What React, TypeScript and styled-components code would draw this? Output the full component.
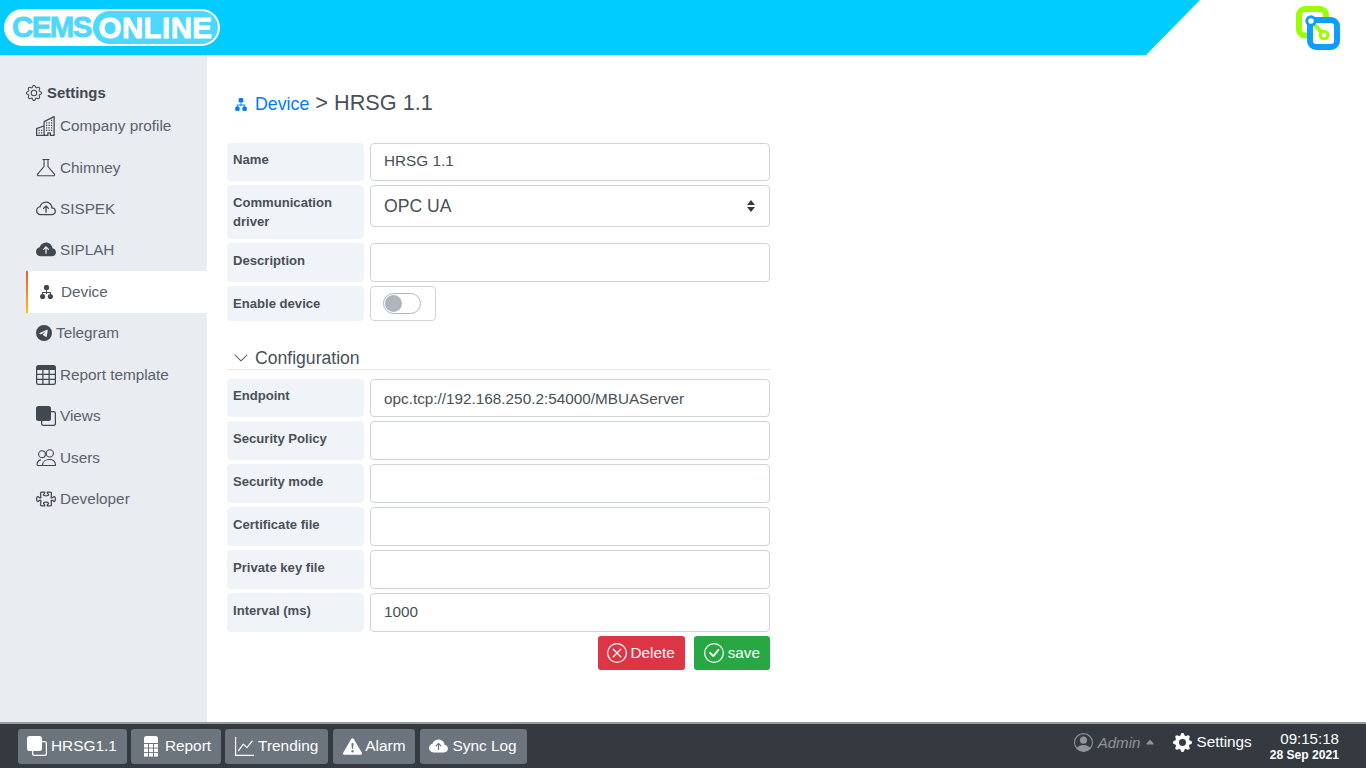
import React from 'react'
import styled, { createGlobalStyle } from 'styled-components'
import {
  BsGear, BsBuildings, BsCloudArrowUp, BsCloudArrowUpFill, BsTelegram, BsTable,
  BsFront, BsPuzzle, BsGraphUp, BsExclamationTriangleFill, BsGearFill,
  BsPersonCircle, BsXCircle, BsCheckCircle, BsChevronDown, BsCaretUpFill,
} from 'react-icons/bs'

const GlobalStyle = createGlobalStyle`
  html, body { margin: 0; padding: 0; height: 100%; overflow: hidden; }
  body { font-family: "Liberation Sans", Arial, sans-serif; background: #fff; color: #495057; }
`

function DeviceIcon({ size }: { size: number }) {
  return (
    <svg width={size} height={size * 1.1} viewBox="0 0 13 14.3" fill="currentColor">
      <rect x="4" y="0" width="5" height="5" rx="1.6" />
      <path d="M6 5h1v2h3.5a.6.6 0 0 1 .6.6V9h-1V8H7v1H6V8H2.9v1h-1V7.6a.6.6 0 0 1 .6-.6H6z" />
      <circle cx="2.6" cy="11.6" r="2.6" />
      <circle cx="10.4" cy="11.6" r="2.6" />
    </svg>
  )
}

function FlaskIcon() {
  return (
    <svg width="20" height="20" viewBox="0 0 20 20" fill="none" stroke="currentColor" strokeWidth="1.1">
      <path d="M6.5 1.5h7M8 1.5v7L1.6 16.2a1 1 0 0 0 .8 1.6h15.2a1 1 0 0 0 .8-1.6L12 8.5v-7" />
    </svg>
  )
}

function UsersIcon() {
  return (
    <svg width="20" height="20" viewBox="0 0 20 20" fill="none" stroke="currentColor" strokeWidth="1.1">
      <circle cx="6" cy="6.2" r="3.4" />
      <circle cx="13.8" cy="5.4" r="3.6" />
      <path d="M1 17.5c0-3.4 1.6-5.4 4-5.6M1 17.5h6" />
      <path d="M6.5 17.5c0-3.6 2.8-6 6.8-6s6.2 2.4 6.2 6z" />
    </svg>
  )
}

function ReportIcon() {
  const cells: [number, number][] = []
  for (let row = 0; row < 3; row++) {
    for (let col = 0; col < 3; col++) cells.push([col * 5, 8 + row * 4.5])
  }
  return (
    <svg width="16" height="21" viewBox="0 0 14 21" fill="#fff">
      <path d="M2.5 0h9A2.5 2.5 0 0 1 14 2.5V7H0V2.5A2.5 2.5 0 0 1 2.5 0z" />
      {cells.map(([x, y]) => (
        <rect key={`${x}-${y}`} x={x} y={y} width="4" height="3.6" />
      ))}
    </svg>
  )
}

const menu = [
  { label: 'Company profile', icon: <BsBuildings size={20} />, gap: 4 },
  { label: 'Chimney', icon: <FlaskIcon />, gap: 4 },
  { label: 'SISPEK', icon: <BsCloudArrowUp size={20} />, gap: 4 },
  { label: 'SIPLAH', icon: <BsCloudArrowUpFill size={20} />, gap: 4 },
  { label: 'Device', icon: <DeviceIcon size={13} />, gap: 8, active: true },
  { label: 'Telegram', icon: <BsTelegram size={16} />, gap: 4 },
  { label: 'Report template', icon: <BsTable size={20} />, gap: 4 },
  { label: 'Views', icon: <BsFront size={20} />, gap: 4 },
  { label: 'Users', icon: <UsersIcon />, gap: 4 },
  { label: 'Developer', icon: <BsPuzzle size={20} />, gap: 4 },
]

const configRows = [
  { label: 'Endpoint', value: 'opc.tcp://192.168.250.2:54000/MBUAServer', short: true, nudge: 1 },
  { label: 'Security Policy', value: '' },
  { label: 'Security mode', value: '' },
  { label: 'Certificate file', value: '' },
  { label: 'Private key file', value: '' },
  { label: 'Interval (ms)', value: '1000', nudge: -1 },
]

const tabs = [
  { label: 'HRSG1.1', icon: <BsFront size={20} />, gap: 4, left: 9, after: 0 },
  { label: 'Report', icon: <ReportIcon />, gap: 6, left: 12, after: 0 },
  { label: 'Trending', icon: <BsGraphUp size={19} />, gap: 4, left: 10, after: 1 },
  { label: 'Alarm', icon: <BsExclamationTriangleFill size={19} />, gap: 3, left: 10, after: 1 },
  { label: 'Sync Log', icon: <BsCloudArrowUpFill size={19} />, gap: 4, left: 9, after: 0 },
]

function Logo() {
  return (
    <LogoPill>
      <LogoCems>CEMS</LogoCems>
      <LogoOnline>ONLINE</LogoOnline>
    </LogoPill>
  )
}

function AppMark() {
  return (
    <svg width="44" height="44" viewBox="0 0 44 44" fill="none">
      <rect x="3" y="3" width="27" height="26.5" rx="6" stroke="#9cff00" strokeWidth="6" />
      <rect x="14" y="14" width="27" height="27" rx="6" fill="#fff" stroke="#0f9dff" strokeWidth="6" />
      <path d="M15 15 L28 29" stroke="#9cff00" strokeWidth="4" />
      <circle cx="15" cy="15" r="4.2" fill="#fff" stroke="#0f9dff" strokeWidth="3" />
      <circle cx="28" cy="29" r="3.8" fill="#fff" stroke="#9cff00" strokeWidth="3" />
    </svg>
  )
}

function FormRow({ label, value, short, nudge = 0 }: { label: string; value: string; short?: boolean; nudge?: number }) {
  return (
    <Row>
      <RowLabel $height={short ? 38 : 39}>{label}</RowLabel>
      <TextField $height={short ? 38 : 39} $nudge={nudge} defaultValue={value} />
    </Row>
  )
}

export default function App() {
  return (
    <Page>
      <GlobalStyle />
      <Header>
        <HeaderBand>
          <Logo />
        </HeaderBand>
        <MarkSlot>
          <AppMark />
        </MarkSlot>
      </Header>

      <Body>
        <Sidebar>
          <SideTitle><BsGear size={16} /> Settings</SideTitle>
          {menu.map((m) => (
            <MenuItem key={m.label} $active={m.active} $gap={m.gap}>
              {m.icon}
              <span>{m.label}</span>
            </MenuItem>
          ))}
        </Sidebar>

        <Main>
          <Breadcrumb>
            <CrumbLink><DeviceIcon size={12} /> Device</CrumbLink>
            <span>&gt; HRSG 1.1</span>
          </Breadcrumb>

          <Form>
            <FormRow label="Name" value="HRSG 1.1" short nudge={-1} />
            <Row>
              <RowLabel $height={54}>Communication driver</RowLabel>
              <SelectBox>
                <span>OPC UA</span>
                <SelectArrows viewBox="0 0 10 14">
                  <path d="M5 1 L9 6 H1 Z M5 13 L1 8 H9 Z" fill="#343a40" />
                </SelectArrows>
              </SelectBox>
            </Row>
            <FormRow label="Description" value="" />
            <Row>
              <RowLabel $height={35}>Enable device</RowLabel>
              <SwitchBox>
                <SwitchTrack><SwitchKnob /></SwitchTrack>
              </SwitchBox>
            </Row>

            <SectionTitle>
              <BsChevronDown size={16} />
              Configuration
            </SectionTitle>

            {configRows.map((r) => (
              <FormRow key={r.label} label={r.label} value={r.value} short={r.short} nudge={r.nudge} />
            ))}

            <Actions>
              <ActionButton $color="#dc3545" $left={9} $gap={3}><BsXCircle size={20} /> Delete</ActionButton>
              <ActionButton $color="#28a745" $left={10} $gap={4}><BsCheckCircle size={20} /> save</ActionButton>
            </Actions>
          </Form>
        </Main>
      </Body>

      <Footer>
        <Tabs>
          {tabs.map((t) => (
            <Tab key={t.label} $gap={t.gap} $left={t.left} $after={t.after}>
              {t.icon}
              <span>{t.label}</span>
            </Tab>
          ))}
        </Tabs>
        <Status>
          <UserMenu>
            <BsPersonCircle size={19} />
            <em>Admin</em>
            <BsCaretUpFill size={10} />
          </UserMenu>
          <SettingsLink><BsGearFill size={19} /> Settings</SettingsLink>
          <Clock>
            <Time>09:15:18</Time>
            <DateText>28 Sep 2021</DateText>
          </Clock>
        </Status>
      </Footer>
    </Page>
  )
}

const Page = styled.div`
  width: 1366px;
  height: 768px;
  display: flex;
  flex-direction: column;
  overflow: hidden;
`

const Header = styled.header`
  height: 55px;
  flex: none;
  display: flex;
  justify-content: space-between;
  background: #fff;
`

const HeaderBand = styled.div`
  width: 1200px;
  height: 55px;
  padding: 9px 0 0 4px;
  box-sizing: border-box;
  background: #00ccff;
  clip-path: polygon(0 0, 100% 0, 1146px 100%, 0 100%);
`

const LogoPill = styled.div`
  width: 216px;
  height: 37px;
  display: flex;
  align-items: stretch;
  justify-content: space-between;
  box-sizing: border-box;
  background: #fff;
  border-radius: 19px;
  font-family: "Liberation Sans", Arial, sans-serif;
  font-weight: 700;
  font-size: 29.5px;
  line-height: 36px;
`

const LogoCems = styled.span`
  color: #4fd8ff;
  padding-left: 8px;
  letter-spacing: -1.6px;
  -webkit-text-stroke: 0.8px #4fd8ff;
`

const LogoOnline = styled.span`
  width: 125px;
  margin: 2px;
  text-align: center;
  background: #4fd8ff;
  color: #fff;
  border-radius: 17px;
  line-height: 34px;
  letter-spacing: 0.4px;
  -webkit-text-stroke: 0.8px #fff;
`

const MarkSlot = styled.div`
  padding: 6px 26px 0 0;
`

const Body = styled.div`
  flex: 1;
  display: flex;
  min-height: 0;
`

const Sidebar = styled.aside`
  width: 207px;
  flex: none;
  box-sizing: border-box;
  padding: 27px 0 0 26px;
  background: #e9ecf1;
`

const SideTitle = styled.div`
  height: 21px;
  display: flex;
  align-items: center;
  gap: 5px;
  margin-bottom: 2.4px;
  font-size: 14.9px;
  font-weight: 700;
  color: #424850;
`

const MenuItem = styled.div<{ $active?: boolean; $gap: number }>`
  height: 41.44px;
  display: flex;
  align-items: center;
  gap: ${(p) => p.$gap}px;
  box-sizing: border-box;
  padding-left: ${(p) => (p.$active ? 12 : 10)}px;
  font-size: 15.3px;
  color: #59626e;
  background: ${(p) => (p.$active ? '#fff' : 'transparent')};
  border-left: ${(p) => (p.$active ? '2px solid' : '0')};
  border-image: ${(p) => (p.$active ? 'linear-gradient(#f0572b, #ffc107) 1' : 'none')};

  svg { color: #424850; flex: none; }
`

const Main = styled.main`
  flex: 1;
  padding: 35px 0 0 20px;
  background: #fff;
`

const Breadcrumb = styled.div`
  display: flex;
  gap: 6px;
  align-items: baseline;
  height: 53px;
  padding-left: 8px;
  font-size: 21.7px;
  color: #495057;
`

const CrumbLink = styled.span`
  font-size: 17.8px;
  color: #007bff;

  svg { margin-right: 3px; vertical-align: -1px; }
`

const Form = styled.form`
  width: 543px;
  display: flex;
  flex-direction: column;
  gap: 4px;
`

const Row = styled.div`
  display: flex;
  gap: 6px;
  align-items: flex-start;
`

const RowLabel = styled.label<{ $height: number }>`
  width: 137px;
  height: ${(p) => p.$height}px;
  flex: none;
  box-sizing: border-box;
  padding: ${(p) => (p.$height === 38 ? 7 : 8)}px 6px 0;
  background: #f0f3f8;
  border-radius: 4px;
  font-size: 13.1px;
  line-height: 19px;
  font-weight: 700;
  color: #495057;
`

const TextField = styled.input<{ $height: number; $nudge: number }>`
  flex: 1;
  height: ${(p) => p.$height}px;
  box-sizing: border-box;
  padding: ${(p) => 1 + p.$nudge}px 13px ${(p) => 1 - p.$nudge}px;
  border: 1px solid #ced4da;
  border-radius: 4px;
  font-family: "Liberation Sans", Arial, sans-serif;
  font-size: 15.3px;
  color: #495057;
  background: #fff;
`

const SelectBox = styled.div`
  flex: 1;
  height: 42px;
  display: flex;
  align-items: center;
  justify-content: space-between;
  box-sizing: border-box;
  padding: 0 13px;
  border: 1px solid #ced4da;
  border-radius: 4px;
  font-size: 17.6px;
  color: #495057;
`

const SelectArrows = styled.svg`
  width: 10px;
  height: 14px;
`

const SwitchBox = styled.div`
  width: 66px;
  height: 35px;
  display: flex;
  align-items: center;
  box-sizing: border-box;
  padding-left: 12px;
  border: 1px solid #ced4da;
  border-radius: 4px;
`

const SwitchTrack = styled.div`
  width: 38px;
  height: 21px;
  box-sizing: border-box;
  padding: 1px;
  border: 1px solid #adb5bd;
  border-radius: 11px;
`

const SwitchKnob = styled.div`
  width: 17px;
  height: 17px;
  border-radius: 50%;
  background: #adb5bd;
`

const SectionTitle = styled.div`
  height: 26px;
  display: flex;
  align-items: center;
  gap: 6px;
  margin: 19px 0 5px;
  box-sizing: border-box;
  padding: 3px 0 0 6px;
  border-bottom: 1px solid #e6e8eb;
  font-size: 17.6px;
  color: #495057;
`

const Actions = styled.div`
  display: flex;
  justify-content: flex-end;
  gap: 9px;
`

const ActionButton = styled.button<{ $color: string; $left: number; $gap: number }>`
  height: 34px;
  display: flex;
  align-items: center;
  gap: ${(p) => p.$gap}px;
  padding: 0 10px 0 ${(p) => p.$left}px;
  border: 0;
  border-radius: 3px;
  background: ${(p) => p.$color};
  color: #fff;
  font-family: "Liberation Sans", Arial, sans-serif;
  font-size: 15.3px;
`

const Footer = styled.footer`
  height: 46px;
  flex: none;
  display: flex;
  align-items: flex-start;
  justify-content: space-between;
  box-sizing: border-box;
  padding: 5px 27px 0 18px;
  background: #343a40;
  border-top: 2px solid #9a9da0;
`

const Tabs = styled.div`
  display: flex;
  gap: 4px;
`

const Tab = styled.div<{ $gap: number; $left: number; $after: number }>`
  height: 35px;
  display: flex;
  align-items: center;
  gap: ${(p) => p.$gap}px;
  box-sizing: border-box;
  padding: 0 10px 1px ${(p) => p.$left}px;
  margin-right: ${(p) => p.$after}px;
  border-radius: 3px;
  background: #6c757d;
  font-size: 15.4px;
  color: #fff;

  svg { flex: none; }
`

const Status = styled.div`
  display: flex;
  align-items: flex-start;
`

const UserMenu = styled.div`
  height: 26px;
  display: flex;
  align-items: center;
  gap: 5px;
  margin-right: 18px;
  font-size: 15.1px;
  color: #8f959b;
`

const SettingsLink = styled.div`
  height: 26px;
  display: flex;
  align-items: center;
  gap: 4px;
  margin-right: 18px;
  font-size: 15.3px;
  color: #fff;
`

const Clock = styled.div`
  margin-top: 1px;
  display: flex;
  flex-direction: column;
  align-items: flex-end;
  color: #fff;
`

const Time = styled.div`
  font-size: 15.1px;
  line-height: 18px;
`

const DateText = styled.div`
  font-size: 12.1px;
  font-weight: 700;
  line-height: 14px;
`
